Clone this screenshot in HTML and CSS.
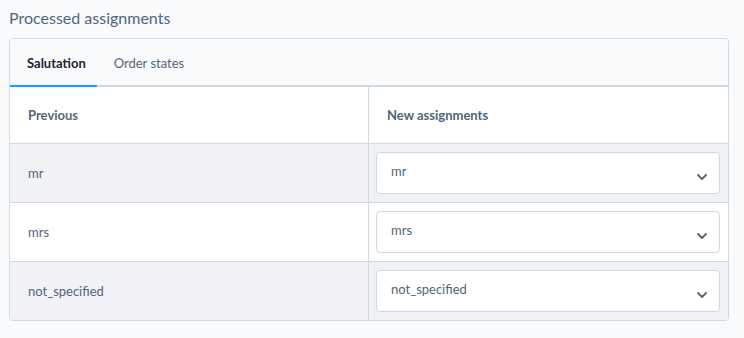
FILE: index.html
```html
<!DOCTYPE html>
<html>
<head>
<meta charset="utf-8">
<link rel="stylesheet" href="styles.css">
</head>
<body>
<div class="page">
  <h3 class="title">Processed assignments</h3>
  <div class="card">
    <div class="tabs">
      <div class="tab active">Salutation</div>
      <div class="tab">Order states</div>
    </div>
    <div class="grid">
      <div class="row head">
        <div class="cell c1">Previous</div>
        <div class="cell c2">New assignments</div>
      </div>
      <div class="row odd">
        <div class="cell c1">mr</div>
        <div class="cell c2"><div class="select"><span>mr</span><svg class="chev" width="10" height="6" viewBox="0 0 10 6"><path d="M1 1l4 4 4-4" fill="none" stroke="#52667a" stroke-width="1.8" stroke-linecap="round" stroke-linejoin="round"/></svg></div></div>
      </div>
      <div class="row">
        <div class="cell c1">mrs</div>
        <div class="cell c2"><div class="select"><span>mrs</span><svg class="chev" width="10" height="6" viewBox="0 0 10 6"><path d="M1 1l4 4 4-4" fill="none" stroke="#52667a" stroke-width="1.8" stroke-linecap="round" stroke-linejoin="round"/></svg></div></div>
      </div>
      <div class="row odd last">
        <div class="cell c1">not_specified</div>
        <div class="cell c2"><div class="select"><span>not_specified</span><svg class="chev" width="10" height="6" viewBox="0 0 10 6"><path d="M1 1l4 4 4-4" fill="none" stroke="#52667a" stroke-width="1.8" stroke-linecap="round" stroke-linejoin="round"/></svg></div></div>
      </div>
    </div>
  </div>
</div>
</body>
</html>
```

FILE: styles.css
```css
html, body {
  margin: 0;
  padding: 0;
  background: #f9fafb;
  font-family: "Lato", "Noto Sans", sans-serif;
  color: #52667a;
}
.page {
  padding: 0 0 0 9px;
  width: 720px;
}
.title {
  margin: 0;
  height: 38px;
  font-size: 16px;
  font-weight: 400;
  line-height: 36px;
  color: #52667a;
}
.card {
  border: 1px solid #d1d9e0;
  border-radius: 4px;
  background: #ffffff;
  overflow: hidden;
}
.tabs {
  display: flex;
  background: #f9fafb;
  border-bottom: 2px solid #d1d9e0;
  box-sizing: border-box;
  height: 48px;
}
.tab {
  padding: 0 11px 0 17px;
  font-size: 13px;
  line-height: 48px;
  color: #52667a;
  margin-bottom: -2px;
  border-bottom: 2px solid transparent;
}
.tab.active {
  color: #1a2633;
  font-weight: 700;
  border-bottom-color: #189eff;
}
.grid {
  display: flex;
  flex-direction: column;
}
.row {
  display: grid;
  grid-template-columns: 359px 1fr;
  height: 59px;
  border-bottom: 1px solid #d1d9e0;
  box-sizing: border-box;
}
.row.head {
  height: 57px;
}
.row.last {
  border-bottom: none;
  height: 58px;
}
.row.odd {
  background: #f0f2f5;
}
.cell {
  display: flex;
  align-items: center;
  font-size: 13px;
}
.c1 {
  padding-left: 18px;
  border-right: 1px solid #d1d9e0;
}
.c2 {
  padding: 0 8px 0 7px;
}
.head .cell {
  font-weight: 700;
  padding-left: 18px;
}
.head .c2 {
  padding-left: 18px;
}
.select {
  flex: 1;
  height: 42px;
  box-sizing: border-box;
  border: 1px solid #d1d9e0;
  border-radius: 4px;
  background: #ffffff;
  display: flex;
  align-items: center;
  padding: 0 12px 0 14px;
  margin-top: -1px;
}
.select span {
  flex: 1;
  margin-top: -4px;
}
.chev {
  margin-top: 8px;
}
```
